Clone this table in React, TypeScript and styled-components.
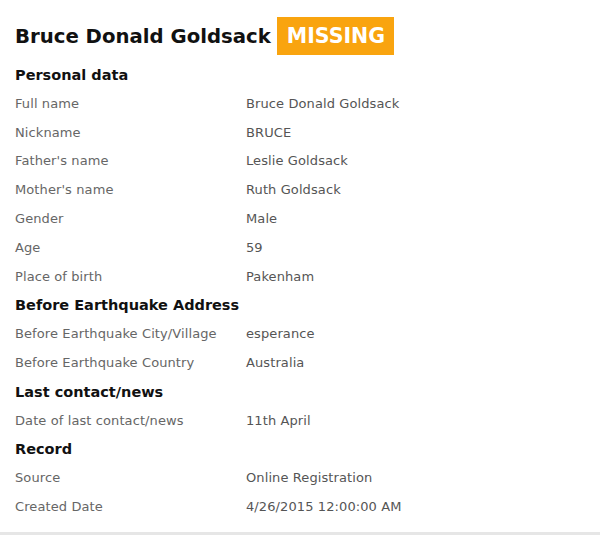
import styled, { createGlobalStyle } from 'styled-components'

const GlobalStyle = createGlobalStyle`
    html, body {
        margin: 0;
        padding: 0;
        background: #fff;
    }
    body {
        font-family: "DejaVu Sans", Verdana, sans-serif;
    }
`

interface Field {
    label: string
    value: string
}

interface Section {
    title: string
    fields: Field[]
}

const sections: Section[] = [
    {
        title: 'Personal data',
        fields: [
            { label: 'Full name', value: 'Bruce Donald Goldsack' },
            { label: 'Nickname', value: 'BRUCE' },
            { label: "Father's name", value: 'Leslie Goldsack' },
            { label: "Mother's name", value: 'Ruth Goldsack' },
            { label: 'Gender', value: 'Male' },
            { label: 'Age', value: '59' },
            { label: 'Place of birth', value: 'Pakenham' },
        ],
    },
    {
        title: 'Before Earthquake Address',
        fields: [
            { label: 'Before Earthquake City/Village', value: 'esperance' },
            { label: 'Before Earthquake Country', value: 'Australia' },
        ],
    },
    {
        title: 'Last contact/news',
        fields: [
            { label: 'Date of last contact/news', value: '11th April' },
        ],
    },
    {
        title: 'Record',
        fields: [
            { label: 'Source', value: 'Online Registration' },
            { label: 'Created Date', value: '4/26/2015 12:00:00 AM' },
        ],
    },
]

const App = () => {
    return (
        <Page>
            <GlobalStyle />
            <Content>
                <Header>
                    <Name>Bruce Donald Goldsack</Name>
                    <StatusBadge>MISSING</StatusBadge>
                </Header>
                {sections.map(section => (
                    <div key={section.title}>
                        <SectionTitle>{section.title}</SectionTitle>
                        {section.fields.map(field => (
                            <Row key={field.label}>
                                <Label>{field.label}</Label>
                                <Value>{field.value}</Value>
                            </Row>
                        ))}
                    </div>
                ))}
            </Content>
            <BottomBar />
        </Page>
    )
}

const Page = styled.div`
    width: 600px;
    height: 535px;
    display: flex;
    flex-direction: column;
    overflow: hidden;
`

const Content = styled.div`
    flex: 1;
    padding: 17px 0 0 15px;
`

const Header = styled.div`
    display: flex;
    align-items: center;
    gap: 6px;
    height: 38px;
    margin-bottom: 6px;
`

const Name = styled.h1`
    margin: 0;
    font-size: 19.7px;
    font-weight: bold;
    color: #111;
`

const StatusBadge = styled.span`
    display: flex;
    align-items: center;
    height: 38px;
    padding: 0 9px 0 10px;
    background: #f9a40f;
    color: #fff;
    font-size: 20.5px;
    font-weight: bold;
`

const SectionTitle = styled.h2`
    margin: 0;
    height: 28.8px;
    line-height: 28.8px;
    font-size: 14.5px;
    font-weight: bold;
    color: #111;
`

const Row = styled.div`
    display: flex;
    height: 28.8px;
    line-height: 28.8px;
    font-size: 13px;
    letter-spacing: 0.1px;
`

const Label = styled.div`
    width: 231px;
    color: #666;
`

const Value = styled.div`
    color: #555;
`

const BottomBar = styled.div`
    height: 3px;
    background: #e6e6e6;
`

export default App
